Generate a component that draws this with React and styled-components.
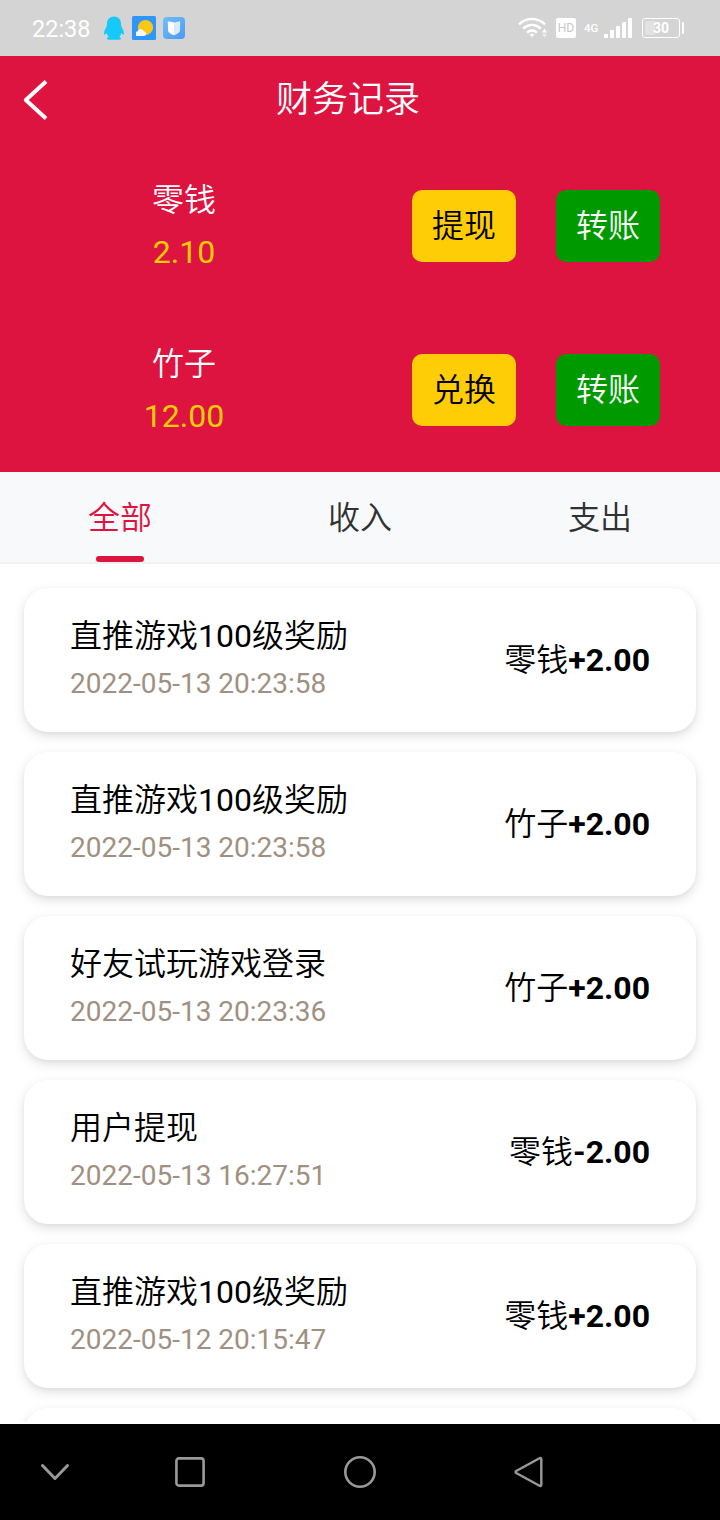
import React from "react";
import styled, { createGlobalStyle } from "styled-components";

const GlobalStyle = createGlobalStyle`
  *, *::before, *::after { box-sizing: border-box; }
  body {
    margin: 0;
    background: #fff;
    font-family: Roboto, "Noto Sans CJK SC DemiLight", "Noto Sans CJK SC", sans-serif;
    color: #000;
  }
  button { font: inherit; border: 0; padding: 0; background: none; color: inherit; }
  svg { display: block; flex: none; }
`;

const Screen = styled.div`
  width: 720px;
  height: 1520px;
  display: flex;
  flex-direction: column;
  overflow: hidden;
`;

const StatusBar = styled.div`
  flex: none;
  height: 56px;
  padding: 0 36px 0 32px;
  display: flex;
  align-items: center;
  justify-content: space-between;
  background: #d4d4d4;
  color: #fff;
`;

const StatusGroup = styled.div`
  display: flex;
  align-items: center;
  gap: ${(p) => p.$gap}px;
`;

const Clock = styled.span`
  font-size: 23.5px;
  line-height: 28px;
  width: 64px;
  padding-top: 2px;
`;

const HdBadge = styled.span`
  width: 20px;
  height: 20px;
  border-radius: 2px;
  background: #fff;
  color: #c8c8c8;
  font-size: 12px;
  line-height: 20px;
  text-align: center;
`;

const NetworkLabel = styled.span`
  width: 12px;
  font-size: 11.5px;
  font-weight: 500;
  line-height: 16px;
`;

const Battery = styled.span`
  display: flex;
  align-items: center;
  gap: 2px;
  padding-left: 2px;
`;

const BatteryBody = styled.span`
  width: 38px;
  height: 20px;
  border: 1.5px solid #fff;
  border-radius: 3px;
  font-size: 14px;
  font-weight: 700;
  line-height: 18px;
  text-align: center;
  background: linear-gradient(#e2e2e2, #e2e2e2) 2px 2px / 10px 14px no-repeat;
`;

const BatteryTip = styled.span`
  width: 2px;
  height: 12px;
  border-radius: 1px;
  background: #fff;
`;

const Hero = styled.header`
  flex: none;
  background: #de1440;
  color: #fff;
`;

const TitleBar = styled.div`
  height: 88px;
  display: grid;
  grid-template-columns: 72px 1fr 96px;
  align-items: center;
`;

const BackButton = styled.button`
  height: 88px;
  padding-left: 22px;
  display: flex;
  align-items: center;
`;

const Title = styled.h1`
  margin: 0;
  font-size: 36px;
  font-weight: 400;
  line-height: 88px;
  text-align: center;
`;

const BalanceRow = styled.div`
  height: 164px;
  display: flex;
  align-items: center;
`;

const Balance = styled.div`
  width: 368px;
  display: flex;
  flex-direction: column;
  align-items: center;
  font-size: 32px;
  line-height: 52px;
`;

const BalanceValue = styled.span`
  color: #ffcd05;
`;

const Actions = styled.div`
  display: flex;
  gap: 40px;
  padding-left: 44px;
`;

const ActionButton = styled.button`
  width: 104px;
  height: 72px;
  border-radius: 10px;
  font-size: 32px;
  line-height: 72px;
  background: ${(p) => (p.$primary ? "#ffcd05" : "#009900")};
  color: ${(p) => (p.$primary ? "#000" : "#fff")};
`;

const Tabs = styled.nav`
  flex: none;
  height: 92px;
  display: flex;
  background: #f8f9fb;
  border-bottom: 2px solid #f1f1f1;
`;

const Tab = styled.button`
  flex: 1;
  display: flex;
  flex-direction: column;
  align-items: center;
  justify-content: space-between;
  font-size: 32px;
  line-height: 84px;
  padding-top: 4px;
  color: ${(p) => (p.$active ? "#de1440" : "#303133")};

  &::after {
    content: "";
    width: 48px;
    height: 6px;
    margin-top: -4px;
    flex: none;
    border-radius: 3px;
    background: ${(p) => (p.$active ? "#de1440" : "transparent")};
  }
`;

const RecordList = styled.main`
  flex: 1;
  min-height: 0;
  margin-bottom: 2px;
  padding: 24px 24px 0;
  display: flex;
  flex-direction: column;
  gap: 20px;
  overflow: hidden;
`;

const Record = styled.article`
  flex: none;
  height: 144px;
  padding: 0 46px;
  display: flex;
  align-items: center;
  justify-content: space-between;
  border-radius: 24px;
  background: #fff;
  box-shadow: 0 4px 12px rgba(0, 0, 0, 0.12), 0 2px 4px rgba(0, 0, 0, 0.04);
`;

const RecordInfo = styled.div`
  display: flex;
  flex-direction: column;
`;

const RecordName = styled.span`
  font-size: 32px;
  line-height: 48px;
`;

const RecordTime = styled.time`
  font-size: 28px;
  line-height: 48px;
  color: #a09082;
`;

const RecordAmount = styled.div`
  font-size: 32px;
  line-height: 48px;
`;

const Currency = styled.span`
  font-weight: 350;
`;

const SystemNav = styled.footer`
  flex: none;
  height: 96px;
  padding-left: 38px;
  display: flex;
  align-items: center;
  background: #000;
`;

const NavButton = styled.button`
  width: ${(p) => p.$width}px;
  display: flex;
`;

const QqIcon = () => (
  <svg width="20" height="24" viewBox="0 0 20 24">
    <path
      fill="#16c9f8"
      d="M10 .5C5.800.5 3 3.500 3 7.500c0 1.500-.2 2.500-.6 3.600C1.200 13 0 15.500.1 17.500c.1 1.400.5 1.600 1 1.100l1.400-1.500c.5 1.700 1.300 3 2.300 4-.9.400-1.900 1-1.900 1.700 0 .8 1.800 1 3.600 1h7c1.800 0 3.600-.2 3.600-1 0-.7-1-1.300-1.900-1.700 1-1 1.800-2.300 2.300-4l1.400 1.500c.5.500.9.300 1-1.100.1-2-1.100-4.500-2.300-6.400-.4-1.100-.6-2.100-.6-3.600C17 3.500 14.200.5 10 .5z"
    />
  </svg>
);

const WeatherIcon = () => (
  <svg width="24" height="24" viewBox="0 0 24 24">
    <rect width="24" height="24" rx="1.500" fill="#2e95fb" />
    <circle cx="13.500" cy="11.500" r="7.600" fill="#fcc616" />
    <path
      fill="#f6f6f6"
      d="M4 20v-3.200c0-1 .8-1.600 1.800-1.500C6 13.800 7.200 13 8.600 13c1.500 0 2.700.9 3 2.200 1.500 0 2.700 1 2.700 2.400 0 1.400-1 2.400-2.400 2.400z"
    />
  </svg>
);

const BookIcon = () => (
  <svg width="22" height="22" viewBox="0 0 22 22">
    <defs>
      <linearGradient id="book-bg" x1="0" y1="0" x2="1" y2="1">
        <stop offset="0" stopColor="#70bcfa" />
        <stop offset="1" stopColor="#4b9bf5" />
      </linearGradient>
    </defs>
    <rect width="22" height="22" rx="4" fill="url(#book-bg)" />
    <path fill="#fff" d="M4.800 4.300 11 5.600v12.600c-2-.5-3.900-1.500-5-2.700-.7-.7-1-1.500-1-2.400z" />
    <path fill="#dbe9fb" d="M17.200 4.300 11 5.600v12.600c2-.5 3.900-1.500 5-2.700.7-.7 1-1.500 1-2.400z" />
  </svg>
);

const AppIcons = styled.div`
  display: flex;
  align-items: center;

  svg + svg { margin-left: 8px; }
  svg:last-child { margin-left: 7px; }
`;

const WifiIcon = () => (
  <svg width="30" height="22" viewBox="0 0 30 22">
    <g fill="none" stroke="#fff" strokeWidth="2.400">
      <path d="M1 7.300c8-7 18-7 26 0" />
      <path d="M5 11.700c5.600-5 12.400-5 18 0" />
      <path d="M9 15.600c3.200-2.700 6.800-2.700 10 0" />
    </g>
    <path fill="#fff" d="M11.500 17.500c1.700-1.300 3.300-1.300 5 0L14 20.300z" />
    <path fill="#fff" d="m26.500 11.500 2.500 4h-5z" />
    <path fill="#ececec" d="m26.500 20.800-2.500-4h5z" />
  </svg>
);

const SignalIcon = () => (
  <svg width="28" height="20" viewBox="0 0 28 20" fill="#fff">
    <rect x="0" y="16" width="4" height="4" rx=".8" />
    <rect x="6" y="12" width="4" height="8" rx=".8" />
    <rect x="12" y="8" width="4" height="12" rx=".8" />
    <rect x="18" y="4" width="4" height="16" rx=".8" />
    <rect x="24" y="0" width="4" height="20" rx=".8" />
  </svg>
);

const BackIcon = () => (
  <svg width="26" height="42" viewBox="0 0 26 42">
    <path
      d="M24 2.500 3.800 21l20.200 18.500"
      fill="none"
      stroke="#fff"
      strokeWidth="4"
      strokeLinecap="butt"
      strokeLinejoin="round"
    />
  </svg>
);

const navStroke = {
  fill: "none",
  stroke: "#999",
  strokeWidth: 2.6,
  strokeLinecap: "round",
  strokeLinejoin: "round",
};

const ChevronDownIcon = () => (
  <svg width="34" height="34" viewBox="0 0 34 34" {...navStroke} strokeWidth="3">
    <path d="M4.500 10.500 17 23.500l12.500-13" />
  </svg>
);

const RecentsIcon = () => (
  <svg width="34" height="34" viewBox="0 0 34 34" {...navStroke}>
    <rect x="3.400" y="3.400" width="27.200" height="27.200" rx="2.600" />
  </svg>
);

const HomeIcon = () => (
  <svg width="34" height="34" viewBox="0 0 34 34" {...navStroke}>
    <circle cx="17" cy="17" r="14.700" />
  </svg>
);

const ReturnIcon = () => (
  <svg width="34" height="34" viewBox="0 0 34 34" {...navStroke} strokeWidth="2.400">
    <path d="M29.300 4.200v25.600c0 1-1 1.500-1.800 1L4.200 18c-.9-.5-.9-1.500 0-2L27.500 3.200c.8-.5 1.800 0 1.800 1z" />
  </svg>
);

const balances = [
  { name: "零钱", value: "2.10", action: "提现" },
  { name: "竹子", value: "12.00", action: "兑换" },
];

const tabs = ["全部", "收入", "支出"];

const records = [
  { name: "直推游戏100级奖励", time: "2022-05-13 20:23:58", currency: "零钱", amount: "+2.00" },
  { name: "直推游戏100级奖励", time: "2022-05-13 20:23:58", currency: "竹子", amount: "+2.00" },
  { name: "好友试玩游戏登录", time: "2022-05-13 20:23:36", currency: "竹子", amount: "+2.00" },
  { name: "用户提现", time: "2022-05-13 16:27:51", currency: "零钱", amount: "-2.00" },
  { name: "直推游戏100级奖励", time: "2022-05-12 20:15:47", currency: "零钱", amount: "+2.00" },
];

export default function App() {
  return (
    <>
      <GlobalStyle />
      <Screen>
        <StatusBar>
          <StatusGroup $gap={8}>
            <Clock>22:38</Clock>
            <AppIcons>
              <QqIcon />
              <WeatherIcon />
              <BookIcon />
            </AppIcons>
          </StatusGroup>
          <StatusGroup $gap={8}>
            <WifiIcon />
            <HdBadge>HD</HdBadge>
            <NetworkLabel>4G</NetworkLabel>
            <SignalIcon />
            <Battery>
              <BatteryBody>30</BatteryBody>
              <BatteryTip />
            </Battery>
          </StatusGroup>
        </StatusBar>

        <Hero>
          <TitleBar>
            <BackButton aria-label="返回">
              <BackIcon />
            </BackButton>
            <Title>财务记录</Title>
          </TitleBar>
          {balances.map((b) => (
            <BalanceRow key={b.name}>
              <Balance>
                <span>{b.name}</span>
                <BalanceValue>{b.value}</BalanceValue>
              </Balance>
              <Actions>
                <ActionButton $primary>{b.action}</ActionButton>
                <ActionButton>转账</ActionButton>
              </Actions>
            </BalanceRow>
          ))}
        </Hero>

        <Tabs>
          {tabs.map((label, i) => (
            <Tab key={label} $active={i === 0}>
              {label}
            </Tab>
          ))}
        </Tabs>

        <RecordList>
          {records.map((r, i) => (
            <Record key={i}>
              <RecordInfo>
                <RecordName>{r.name}</RecordName>
                <RecordTime>{r.time}</RecordTime>
              </RecordInfo>
              <RecordAmount>
                <Currency>{r.currency}</Currency>
                <b>{r.amount}</b>
              </RecordAmount>
            </Record>
          ))}
          <Record />
        </RecordList>

        <SystemNav>
          <NavButton $width={135} aria-label="收起">
            <ChevronDownIcon />
          </NavButton>
          <NavButton $width={170} aria-label="最近">
            <RecentsIcon />
          </NavButton>
          <NavButton $width={169} aria-label="主页">
            <HomeIcon />
          </NavButton>
          <NavButton $width={34} aria-label="后退">
            <ReturnIcon />
          </NavButton>
        </SystemNav>
      </Screen>
    </>
  );
}
